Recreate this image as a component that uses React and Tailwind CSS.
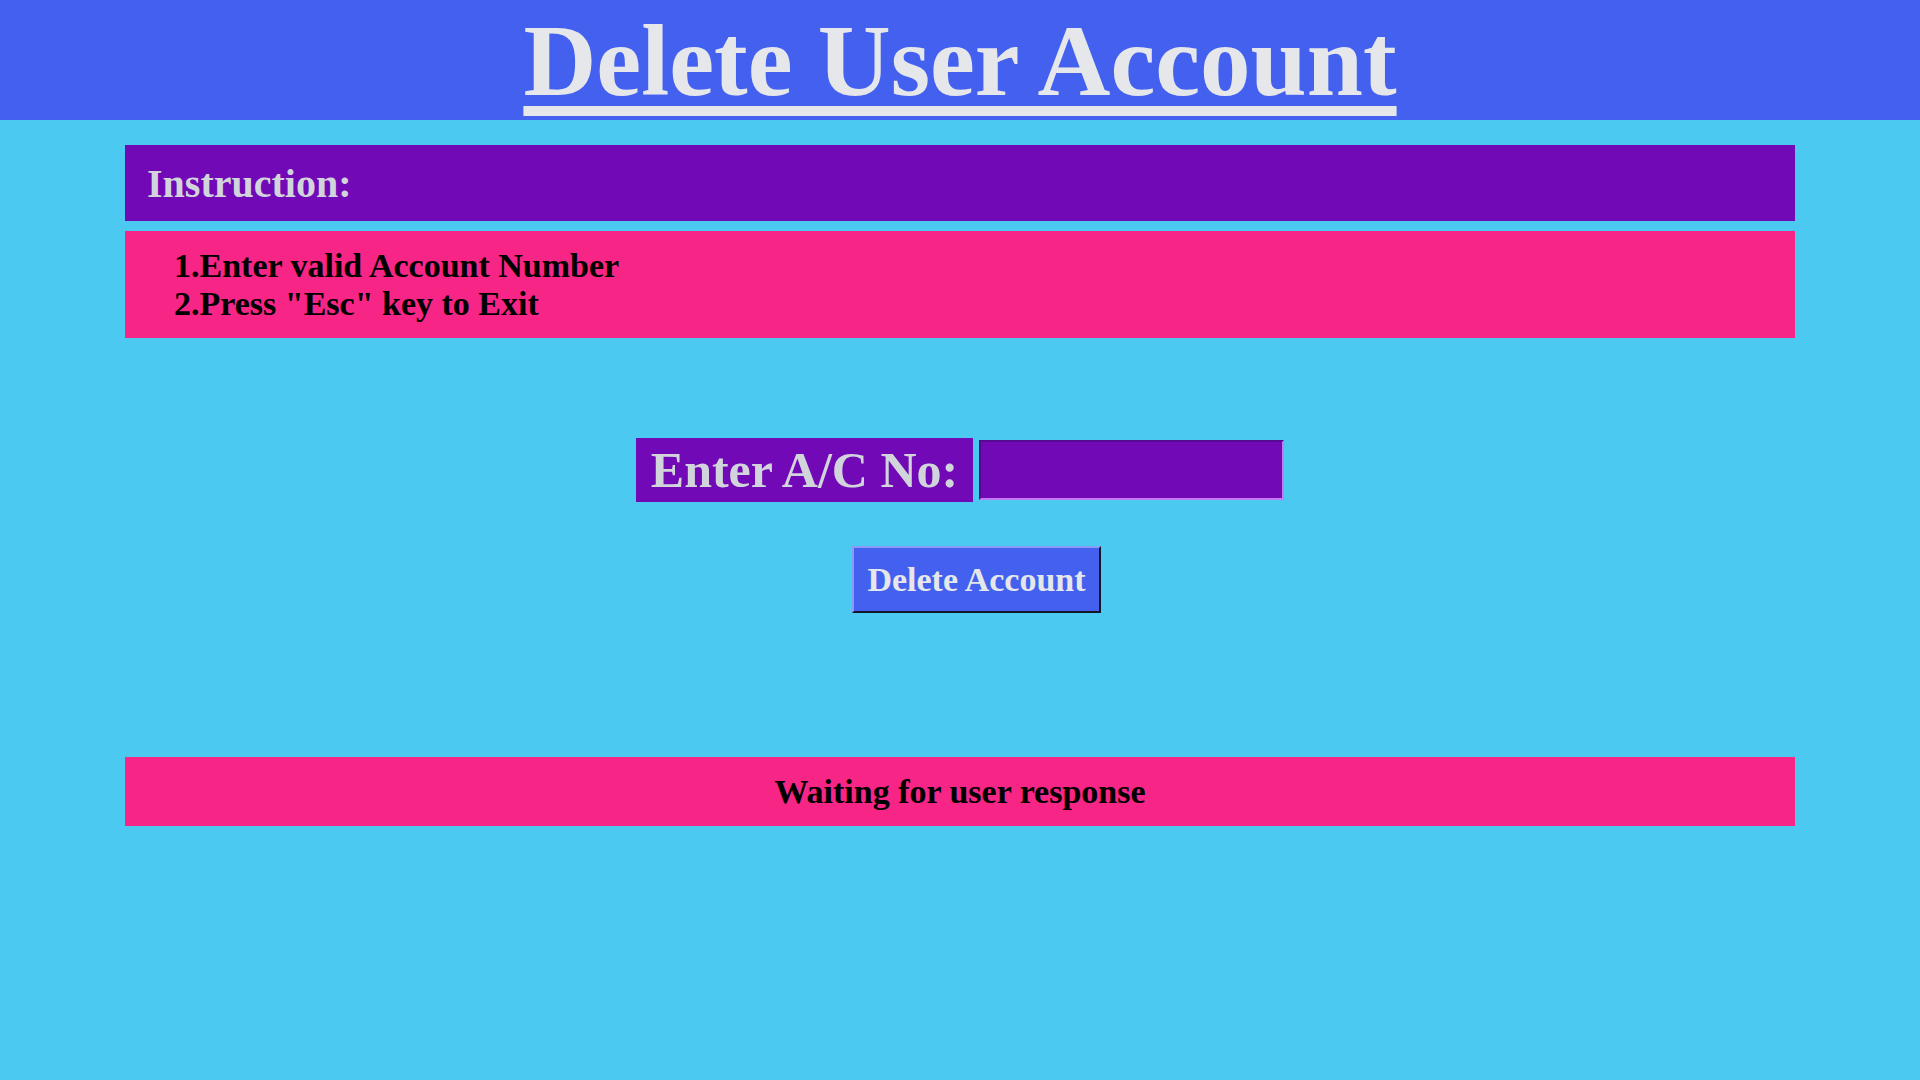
import React, { useState } from 'react';

const serif = { fontFamily: '"Liberation Serif", "Times New Roman", serif' };

const DeleteAccount = () => {
  const [accountNo, setAccountNo] = useState('');
  const [status, setStatus] = useState('Waiting for user response');

  const handleDelete = () => {
    if (!accountNo.trim()) {
      setStatus('Waiting for user response');
      return;
    }
    setStatus(`Account ${accountNo} deleted`);
  };

  return (
    <div className="min-h-screen bg-[#4cc9f0] font-bold" style={serif}>
      {/* header */}
      <div className="h-[120px] bg-[#4361ee] flex justify-center">
        <h1 className="pt-[6px] text-[101px] leading-[110px] text-[#e5e7eb] underline decoration-[10px] underline-offset-[11px]">
          Delete User Account
        </h1>
      </div>

      <div className="mx-[125px]">
        <div className="mt-[25px] h-[76px] bg-[#7209b7] pl-[22px] pt-[2px] flex items-center text-[40px] leading-[44px] text-[#d1d5db]">
          Instruction:
        </div>
        <div className="mt-[10px] bg-[#f72585] pt-4 pb-[15px] pl-[49px] text-[34px] leading-[38px] text-black">
          <div>1.Enter valid Account Number</div>
          <div>2.Press "Esc" key to Exit</div>
        </div>

        <div className="mt-[100px] flex justify-center items-center gap-[6px]">
          <label className="h-[64px] bg-[#7209b7] px-[15px] flex items-center text-[50px] leading-[54px] text-[#d1d5db]">
            Enter A/C No:
          </label>
          <input
            value={accountNo}
            onChange={e => setAccountNo(e.target.value)}
            className="w-[305px] h-[60px] bg-[#7209b7] border-2 border-t-[#560a8f] border-l-[#560a8f] border-r-[#c47af2] border-b-[#c47af2] px-2 text-[30px] text-[#e5e7eb] outline-none"
            style={serif}
          />
        </div>

        <div className="mt-[44px] flex justify-center">
          <button
            onClick={handleDelete}
            className="ml-[33px] w-[249px] h-[67px] bg-[#4361ee] border-2 border-t-[#8b9cf7] border-l-[#8b9cf7] border-r-[#111827] border-b-[#111827] text-[34px] leading-[38px] font-bold text-[#e5e7eb]"
            style={serif}
          >
            Delete Account
          </button>
        </div>

        <div className="mt-[144px] h-[69px] bg-[#f72585] flex items-center justify-center text-[34px] leading-[38px] text-black">
          {status}
        </div>
      </div>
    </div>
  );
};

export default function App() {
  return <DeleteAccount />;
}
